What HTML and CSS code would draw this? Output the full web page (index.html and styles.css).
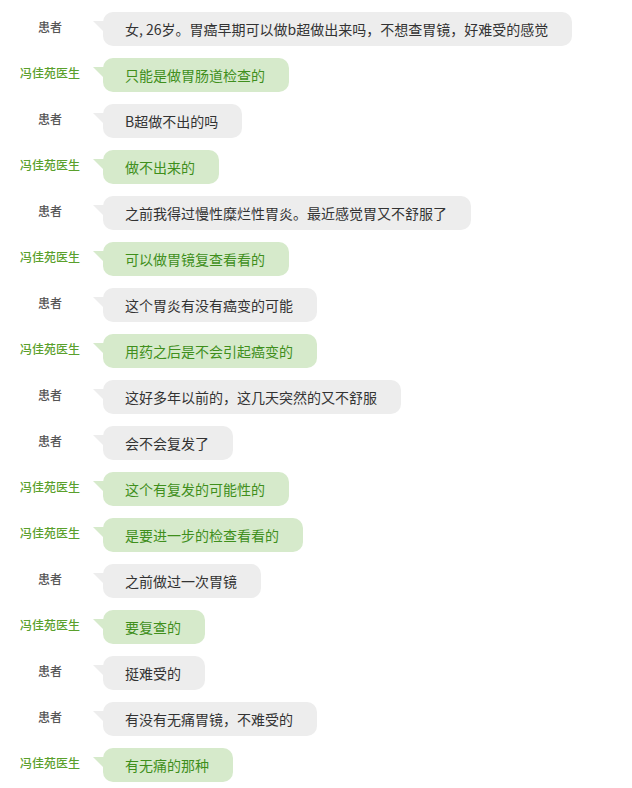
FILE: index.html
```html
<!DOCTYPE html>
<html lang="zh">
<head>
<meta charset="utf-8">
<link rel="stylesheet" href="styles.css">
</head>
<body>
<div class="chat">
  <div class="row patient"><div class="who">患者</div><div class="bubble">女, 26岁。胃癌早期可以做b超做出来吗，不想查胃镜，好难受的感觉</div></div>
  <div class="row doctor"><div class="who">冯佳苑医生</div><div class="bubble">只能是做胃肠道检查的</div></div>
  <div class="row patient"><div class="who">患者</div><div class="bubble">B超做不出的吗</div></div>
  <div class="row doctor"><div class="who">冯佳苑医生</div><div class="bubble">做不出来的</div></div>
  <div class="row patient"><div class="who">患者</div><div class="bubble">之前我得过慢性糜烂性胃炎。最近感觉胃又不舒服了</div></div>
  <div class="row doctor"><div class="who">冯佳苑医生</div><div class="bubble">可以做胃镜复查看看的</div></div>
  <div class="row patient"><div class="who">患者</div><div class="bubble">这个胃炎有没有癌变的可能</div></div>
  <div class="row doctor"><div class="who">冯佳苑医生</div><div class="bubble">用药之后是不会引起癌变的</div></div>
  <div class="row patient"><div class="who">患者</div><div class="bubble">这好多年以前的，这几天突然的又不舒服</div></div>
  <div class="row patient"><div class="who">患者</div><div class="bubble">会不会复发了</div></div>
  <div class="row doctor"><div class="who">冯佳苑医生</div><div class="bubble">这个有复发的可能性的</div></div>
  <div class="row doctor"><div class="who">冯佳苑医生</div><div class="bubble">是要进一步的检查看看的</div></div>
  <div class="row patient"><div class="who">患者</div><div class="bubble">之前做过一次胃镜</div></div>
  <div class="row doctor"><div class="who">冯佳苑医生</div><div class="bubble">要复查的</div></div>
  <div class="row patient"><div class="who">患者</div><div class="bubble">挺难受的</div></div>
  <div class="row patient"><div class="who">患者</div><div class="bubble">有没有无痛胃镜，不难受的</div></div>
  <div class="row doctor"><div class="who">冯佳苑医生</div><div class="bubble">有无痛的那种</div></div>
</div>
</body>
</html>
```

FILE: styles.css
```css
html, body {
  margin: 0;
  padding: 0;
  background: #ffffff;
}
body {
  font-family: "Microsoft YaHei", "Noto Sans CJK SC", sans-serif;
}
.chat {
  display: flex;
  flex-direction: column;
  gap: 12px;
  padding-top: 12px;
}
.row {
  display: flex;
  align-items: flex-start;
}
.who {
  width: 100px;
  flex: none;
  text-align: center;
  font-size: 12px;
  line-height: 16px;
  margin-top: 7px;
  font-weight: 500;
}
.patient .who {
  color: #555555;
}
.doctor .who {
  color: #5aa02c;
}
.bubble {
  position: relative;
  margin-left: 3px;
  padding: 8px 24px 8px 22px;
  font-size: 14px;
  line-height: 18px;
  border-radius: 10px;
  white-space: nowrap;
}
.bubble::before {
  content: "";
  position: absolute;
  left: -10px;
  top: 9px;
  width: 13px;
  height: 13px;
  clip-path: polygon(0 0, 100% 0, 100% 100%);
  background: inherit;
}
.patient .bubble {
  background: #ededed;
  color: #333333;
}
.doctor .bubble {
  background: #d6eacb;
  color: #3f8f1c;
}
```
